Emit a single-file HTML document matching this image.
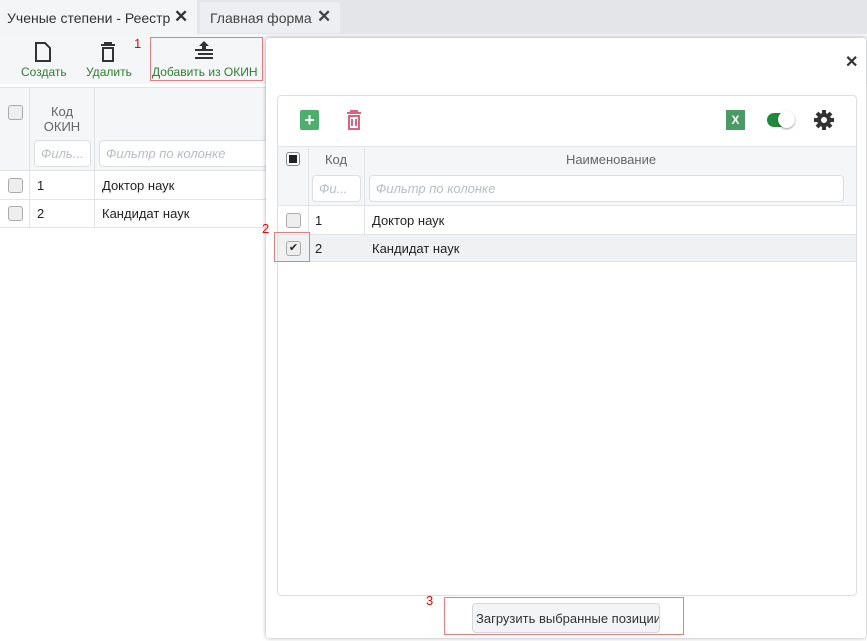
<!DOCTYPE html><html><head><meta charset="utf-8"><style>
*{box-sizing:border-box}body{margin:0;width:867px;height:641px;overflow:hidden;background:#fff;font-family:"Liberation Sans",sans-serif;font-size:13px;color:#222;position:relative}
.a{position:absolute}
.cb{position:absolute;width:15px;height:15px;border:1px solid #aaa;border-radius:3px;background:#eee}
.red{position:absolute;border:1.5px solid #ee7a80}
.num{position:absolute;color:#e00;font-size:13px}
.inp{position:absolute;border:1px solid #dcdee2;border-radius:4px;background:#fff;color:#b8bcc4;font-style:italic;font-size:13px;padding:5px 6px;height:27px;white-space:nowrap;overflow:hidden}
</style></head><body>
<div class="a" style="left:0;top:0;width:867px;height:34px;background:#e3e5e8"></div>
<div class="a" style="left:0;top:0;width:197px;height:34px;background:#f4f5f7;padding:10px 7px;font-size:14px;color:#333">Ученые степени - Реестр <span style="position:absolute;left:174px;top:7px;font-size:17px;font-weight:bold">✕</span></div>
<div class="a" style="left:200px;top:2px;width:140px;height:31px;background:#eceef1;padding:8px 10px;font-size:14px;color:#444">Главная форма <span style="position:absolute;left:117px;top:5px;font-size:17px;font-weight:bold">✕</span></div>
<div class="a" style="left:0;top:34px;width:867px;height:50px;background:#f5f6f7"></div>
<svg class="a" style="left:34px;top:42px" width="18" height="20"><path d="M2 1h9l5 5v13H2z" fill="none" stroke="#333" stroke-width="2"/></svg>
<div class="a" style="left:21px;top:65px;color:#2e7d32;font-size:12px">Создать</div>
<svg class="a" style="left:100px;top:42px" width="16" height="20"><path d="M1 3h14M5 3V1h6v2M3 6h10v13H3z" fill="none" stroke="#333" stroke-width="2"/></svg>
<div class="a" style="left:86px;top:65px;color:#2e7d32;font-size:12px">Удалить</div>
<svg class="a" style="left:194px;top:41px" width="20" height="20"><path d="M10 0l5 5h-3v3H8V5H5z" fill="#333"/><path d="M1 9h18M4 13h15M1 17h18" stroke="#333" stroke-width="2"/></svg>
<div class="a" style="left:152px;top:65px;color:#2e7d32;font-size:12px">Добавить из ОКИН</div>
<div class="num" style="left:134px;top:36px">1</div>
<div class="red" style="left:150px;top:37px;width:113px;height:44px"></div>
<div class="a" style="left:0;top:87px;width:270px;height:84px;background:#f5f6f7;border-top:1px solid #e1e3e6;border-bottom:1px solid #e1e3e6"></div>
<div class="a" style="left:29px;top:87px;width:1px;height:140px;background:#e1e3e6"></div>
<div class="a" style="left:94px;top:87px;width:1px;height:140px;background:#e1e3e6"></div>
<div class="cb" style="left:8px;top:105px"></div>
<div class="a" style="left:30px;top:104px;width:64px;text-align:center;color:#666;line-height:15px">Код<br>ОКИН</div>
<div class="inp" style="left:34px;top:140px;width:57px">Филь...</div>
<div class="inp" style="left:99px;top:140px;width:180px">Фильтр по колонке</div>
<div class="a" style="left:0;top:199px;width:270px;height:1px;background:#e1e3e6"></div>
<div class="a" style="left:0;top:227px;width:270px;height:1px;background:#e1e3e6"></div>
<div class="cb" style="left:8px;top:178px"></div><div class="a" style="left:37px;top:178px">1</div><div class="a" style="left:102px;top:178px">Доктор наук</div>
<div class="cb" style="left:8px;top:206px"></div><div class="a" style="left:37px;top:206px">2</div><div class="a" style="left:102px;top:206px">Кандидат наук</div>

<div class="a" style="left:266px;top:38px;width:600px;height:600px;background:#fff;box-shadow:0 0 4px rgba(0,0,0,.35);border-radius:3px"></div>
<div class="a" style="left:845px;top:52px;font-size:16px;font-weight:bold;color:#333">✕</div>
<div class="a" style="left:277px;top:95px;width:580px;height:501px;border:1px solid #dcdee2;border-radius:4px"></div>
<div class="a" style="left:300px;top:110px;width:19px;height:20px;background:#4caf6e;border-radius:2px;color:#fff;text-align:center;font-size:18px;line-height:20px;font-weight:bold">+</div>
<svg class="a" style="left:346px;top:110px" width="16" height="20"><path d="M1 3h14M5 3V1h6v2M3 6h10v13H3zM6 9v7M10 9v7" fill="none" stroke="#e06080" stroke-width="2"/></svg>
<div class="a" style="left:726px;top:110px;width:19px;height:20px;background:#4a9a64;color:#fff;text-align:center;font-size:12px;line-height:20px;font-weight:bold">X</div>
<div class="a" style="left:767px;top:113px;width:26px;height:14px;border-radius:7px;background:#1f8a3c"></div>
<div class="a" style="left:778px;top:111px;width:17px;height:17px;border-radius:50%;background:#fff;box-shadow:0 1px 2px rgba(0,0,0,.4)"></div>
<svg class="a" style="left:814px;top:110px" width="20" height="20" viewBox="0 0 20 20"><g fill="#333"><circle cx="10" cy="10" r="7"/><g stroke="#333" stroke-width="4"><path d="M10 0v20M0 10h20M3 3l14 14M17 3L3 17"/></g></g><circle cx="10" cy="10" r="3" fill="#fff"/></svg>
<div class="a" style="left:278px;top:146px;width:578px;height:60px;background:#f5f6f7;border-top:1px solid #e1e3e6;border-bottom:1px solid #e1e3e6"></div>
<div class="a" style="left:308px;top:146px;width:1px;height:116px;background:#e1e3e6"></div>
<div class="a" style="left:364px;top:146px;width:1px;height:116px;background:#e1e3e6"></div>
<div class="a" style="left:286px;top:152px;width:14px;height:14px;border:1px solid #888;border-radius:3px;background:#fff"><div style="margin:2px;width:8px;height:8px;background:#222"></div></div>
<div class="a" style="left:308px;top:152px;width:56px;text-align:center;color:#666">Код</div>
<div class="a" style="left:365px;top:152px;width:492px;text-align:center;color:#666">Наименование</div>
<div class="inp" style="left:312px;top:175px;width:49px">Фи...</div>
<div class="inp" style="left:369px;top:175px;width:475px">Фильтр по колонке</div>
<div class="a" style="left:278px;top:234px;width:578px;height:28px;background:#f0f1f3;border-top:1px solid #e1e3e6;border-bottom:1px solid #e1e3e6"></div>
<div class="cb" style="left:286px;top:213px"></div><div class="a" style="left:315px;top:213px">1</div><div class="a" style="left:372px;top:213px">Доктор наук</div>
<div class="cb" style="left:286px;top:241px;font-size:11px;line-height:13px;text-align:center;color:#222">✔</div><div class="a" style="left:315px;top:241px">2</div><div class="a" style="left:372px;top:241px">Кандидат наук</div>
<div class="num" style="left:262px;top:221px">2</div>
<div class="red" style="left:274px;top:232px;width:36px;height:30px"></div>
<div class="a" style="left:472px;top:603px;width:188px;height:30px;border:1px solid #d5d7db;border-radius:4px;background:#f3f4f6;padding:7px 0 0 3px;font-size:13px;color:#333;white-space:nowrap;overflow:hidden">Загрузить выбранные позиции</div>
<div class="num" style="left:426px;top:593px">3</div>
<div class="red" style="left:444px;top:597px;width:240px;height:38px"></div>
</body></html>
